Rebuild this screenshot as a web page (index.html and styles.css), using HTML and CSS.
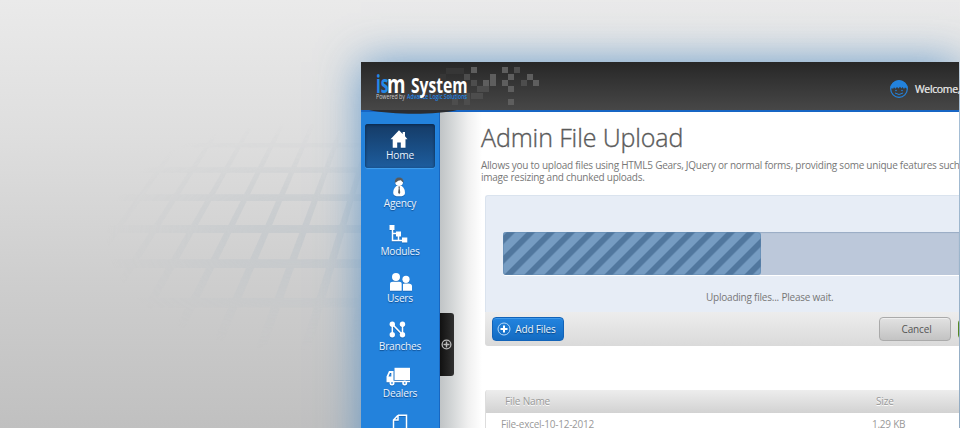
FILE: index.html
```html
<!DOCTYPE html>
<html lang="en">
<head>
<meta charset="utf-8">
<title>ism System</title>
<link rel="stylesheet" href="styles.css">
</head>
<body>
<div class="stage">
  <svg class="floor" width="400" height="310" viewBox="-300 0 1200 930">
    <defs>
      <radialGradient id="fade" gradientUnits="userSpaceOnUse" cx="0" cy="0" r="1" gradientTransform="translate(580 350) scale(560 340)">
        <stop offset="0" stop-color="#fff"/><stop offset=".35" stop-color="#fff" stop-opacity=".7"/><stop offset=".7" stop-color="#fff" stop-opacity=".25"/><stop offset="1" stop-color="#fff" stop-opacity="0"/>
      </radialGradient>
      <mask id="m" maskUnits="userSpaceOnUse" x="-300" y="0" width="1200" height="930"><path fill="url(#fade)" d="M-300 0H900V930H-300z"/></mask>
    </defs>
    <path mask="url(#m)" fill="#bdc5ca" fill-opacity=".58" d="M637 0H649L354 700H324zM727 0H739L491 700H461zM818 0H830L628 700H598zM908 0H920L766 700H736zM547 0H559L217 700H187zM456 0H468L80 700H50zM366 0H378L-57 700H-87zM276 0H288L-195 700H-225zM-300 69H900V82H-300zM-300 142H900V158H-300zM-300 223H900V243H-300zM-300 315H900V339H-300zM-300 418H900V444H-300zM-300 534H900V562H-300z"/>
  </svg>
  <div class="window">
    <header class="header">
      <svg class="pixels" width="100" height="48" viewBox="0 0 100 48">
        <path fill="#363636" d="M6 6h6v6h-6zM12 6h6v6h-6zM18 6h6v6h-6zM0 12h6v6h-6z"/>
        <path fill="#4d4d4d" d="M24 12h6v6h-6zM24 31h6v6h-6zM12 37h6v6h-6zM31 18h6v6h-6zM37 24h6v6h-6zM37 31h6v6h-6zM31 31h6v6h-6zM43 24h6v6h-6zM81 18h6v6h-6zM74 5h6v6h-6zM24 37h6v6h-6z"/>
        <path fill="#5e5e5e" d="M31 5h6v6h-6zM50 12h6v6h-6zM62 5h6v6h-6zM43 18h6v6h-6zM50 18h6v6h-6zM62 18h6v6h-6zM68 12h6v6h-6zM68 24h6v6h-6zM68 37h6v6h-6zM87 12h6v6h-6zM93 18h6v6h-6z"/>
      </svg>
      <svg class="logo" width="94" height="32" viewBox="0 0 94 32">
        <text class="logo-tag" x="0" y="27.800" textLength="29" lengthAdjust="spacingAndGlyphs">Powered by</text>
        <text class="logo-tag blue" x="31" y="27.800" textLength="60" lengthAdjust="spacingAndGlyphs">Advance Logic Solutions</text>
        <text class="logo-ism blue" x="0" y="21.500" textLength="12.500" lengthAdjust="spacingAndGlyphs">is</text>
        <text class="logo-ism" x="11" y="21.500" textLength="18.500" lengthAdjust="spacingAndGlyphs">m</text>
        <text class="logo-name" x="35" y="21.500" textLength="56.500" lengthAdjust="spacingAndGlyphs">System</text>
      </svg>
      <div class="user">
        <svg width="20" height="20" viewBox="0 0 20 20"><circle cx="10" cy="10" r="8.300" fill="none" stroke="#2382dc" stroke-width="1.200"/><path fill="#2382dc" d="M1.200 10A8.800 8.800 0 0 1 18.800 10L17 9 16 8.500 15 10 13.500 8 12.500 9.500 11 7.800 9.500 9.500 8 8 6.500 9.700 5 8.200 4 10 3 9z"/><circle cx="7" cy="11.500" r=".8" fill="#2382dc"/><circle cx="13" cy="11.500" r=".8" fill="#2382dc"/><path d="M6 14q4 3 8 0" fill="none" stroke="#2382dc"/></svg>
        <span>Welcome,</span>
      </div>
    </header>
    <div class="body">
      <svg class="lip" width="99" height="6" viewBox="0 0 99 6"><path fill="#2b2d31" d="M8 0H96C76 5 32 5 8 0z"/></svg>
      <nav class="nav">
        <a class="item active"><svg width="24" height="20" viewBox="0 0 24 20"><path d="M11 1.300L2.500 10.300H4.700V18.800H9.200V13.500H12.800V18.800H17.500V10.300H19.500L17 7.300V3H14.700V5z"/></svg><span>Home</span></a>
        <a class="item"><svg width="24" height="22" viewBox="0 0 24 22"><path d="M8 10Q4.500 13 4.500 17.500 4.500 21.300 11 21.300T17.500 17.500Q17.500 13 14 10z"/><circle cx="11" cy="5.500" r="4.300"/><path fill="#565a5e" d="M6.300 6Q6 .6 11 .6T15.800 6Q14.500 5.500 13 3.600 10 3.500 7.500 6zM10.200 10.500h1.800l-.4 2 .7 4.500-1.200 2-1.200-2 .7-4.500z"/></svg><span>Agency</span></a>
        <a class="item"><svg width="24" height="20" viewBox="0 0 24 20"><path d="M1.500 1h5v5H1.500zM8 7.500h5v5H8zM14 13.500h5.300v5H14z"/><path class="line" d="M4.500 5V16.500H15M4.500 9.500H9M10.500 12V16.500"/></svg><span>Modules</span></a>
        <a class="item"><svg width="26" height="20" viewBox="0 0 26 20"><circle cx="9" cy="5" r="4"/><circle cx="19" cy="7.300" r="3.600"/><path d="M3 18.700V12Q3 9.700 6 9.700H12Q14.700 9.700 14.700 12V18.700zM16 18.700V12Q16.500 11.500 18 11.500H21Q25 11.500 25 14V18.700z"/></svg><span>Users</span></a>
        <a class="item"><svg width="24" height="20" viewBox="0 0 24 20"><circle cx="4.300" cy="5.200" r="2.700"/><circle cx="14.500" cy="5.200" r="2.700"/><circle cx="4.300" cy="15.700" r="2.700"/><circle cx="14.500" cy="15.700" r="2.700"/><path class="line" d="M4.300 15.700V5.200L14.500 15.700V5.200"/></svg><span>Branches</span></a>
        <a class="item"><svg width="28" height="20" viewBox="0 0 28 20"><path d="M8.500 .8H24V13H8.500z"/><path fill-rule="evenodd" d="M.5 14.500V9.500L3 4H7.500V13.800H24V15.300H.5zM4 6L2.500 9.500H5.300V6z"/><circle cx="6" cy="16" r="2.500"/><circle cx="18.700" cy="16" r="2.500"/><path fill="#2382dc" d="M5.200 15.200h1.600v1.600H5.200zM17.900 15.200h1.600v1.600h-1.600z"/></svg><span>Dealers</span></a>
        <a class="item"><svg width="24" height="20" viewBox="0 0 24 20"><path class="line" d="M10 .2H18.500V22M10 .2L5.500 5V22M10 .2V5H5.500"/></svg></a>
      </nav>
      <div class="handle"><svg width="11" height="11" viewBox="0 0 11 11"><circle cx="5.500" cy="5.500" r="4.400" fill="none" stroke="#bbb" stroke-width="1.300"/><path d="M5.500 2.500V8.500M2.500 5.500H8.500" stroke="#bbb" stroke-width="1.500"/></svg></div>
      <main class="main">
        <h1>Admin File Upload</h1>
        <p class="intro">Allows you to upload files using HTML5 Gears, JQuery or normal forms, providing some unique features such as<br>image resizing and chunked uploads.</p>
        <section class="uploader">
          <div class="progress-area">
            <div class="track"><svg class="bar" width="258" height="43" viewBox="0 0 258 43"><defs><pattern id="stripes" width="20" height="43" patternUnits="userSpaceOnUse" patternTransform="translate(4 0) skewX(-45)"><path fill="#769cc2" d="M0 0h20v43H0z"/><path fill="#51779e" d="M0 0h8.500v43H0z"/></pattern></defs><rect width="258" height="43" rx="3" fill="url(#stripes)"/><rect x=".5" y=".5" width="257" height="42" rx="3" fill="none" stroke="#5e86ad" stroke-opacity=".45"/></svg></div>
            <div class="status">Uploading files... Please wait.</div>
          </div>
          <div class="actions">
            <button class="btn add"><svg width="14" height="14" viewBox="0 0 14 14"><circle cx="7" cy="7" r="6" fill="none" stroke="#b5d8f7"/><path d="M7 3.500V10.500M3.500 7H10.500" stroke="#fff" stroke-width="2"/></svg><span>Add Files</span></button>
            <button class="btn cancel">Cancel</button>
            <button class="btn upload"></button>
          </div>
        </section>
        <section class="files">
          <div class="row head"><span>File Name</span><span>Size</span></div>
          <div class="row"><span>File-excel-10-12-2012</span><span>1.29 KB</span></div>
        </section>
      </main>
    </div>
  </div>
</div>
</body>
</html>
```
FILE: styles.css
```css
* { box-sizing: border-box; }
body { margin: 0; overflow: hidden; background: #fff; font-family: "Open Sans", sans-serif; }
.stage { position: relative; height: 428px; overflow: hidden; padding: 62px 1px 0 361px; background: linear-gradient(#eaeaea, #dedede 32%, #cecece 65%, #c0c0c0); }
.floor { position: absolute; left: 0; top: 120px; }
.window { position: relative; height: 520px; background: #fff; box-shadow: 0 0 40px rgba(78, 140, 198, .8); display: flex; flex-direction: column; }
.header { position: relative; height: 50px; flex: none; display: flex; justify-content: space-between; background: linear-gradient(#272727, #474747); border-bottom: 2px solid #1765c4; }
.pixels { position: absolute; left: 79px; top: 0; }
.logo { position: relative; margin: 9px 0 0 15px; overflow: visible; }
.logo text { fill: #fff; }
.logo .blue { fill: #2388e8; }
.logo-ism { font-size: 25px; font-weight: 700; }
.logo-name { font-size: 20.5px; font-weight: 700; }
.logo .logo-tag { font-size: 7px; font-weight: 400; fill: #ccc; }
.logo .logo-tag.blue { fill: #2388e8; font-weight: 600; }
.user { display: flex; align-items: center; height: 54px; gap: 6px; width: 70px; color: #eee; font-size: 10.500px; letter-spacing: -.35px; white-space: nowrap; font-weight: 400; -webkit-text-stroke: .2px #eee; }
.user svg { flex: none; }
.body { position: relative; flex: 1; display: flex; min-height: 0; }
.lip { position: absolute; left: 0; top: -2px; z-index: 2; }
.nav { width: 79px; flex: none; padding: 12px 4px 0 4px; background: #2382dc; border-right: 1px solid #1767c2; display: flex; flex-direction: column; gap: 3.600px; }
.item { height: 44px; flex: none; display: flex; flex-direction: column; align-items: center; color: #eaf4ff; font-size: 10.200px; letter-spacing: -.25px; line-height: 14px; text-shadow: 0 1px 1px rgba(0, 40, 90, .6); }
.item span { margin-top: -.6px; }
.item svg { fill: #fff; height: 20px; flex: none; margin: 5px 0 0; filter: drop-shadow(0 1px 0 rgba(0, 50, 110, .3)); overflow: visible; }
.item .line { fill: none; stroke: #fff; stroke-width: 1.500; }
.active { border-radius: 3px; background: linear-gradient(#153b66, #1d5d9e); box-shadow: inset 0 1px 3px #0a284b, 0 1px 1px #43a0ee; }
.handle { position: absolute; left: 79px; top: 201px; width: 14px; height: 63px; border-radius: 0 3px 3px 0; background: linear-gradient(90deg, #111, #303030); display: flex; align-items: center; justify-content: center; }
.handle svg { margin-left: -1px; flex: none; }
.main { flex: 1; min-width: 0; padding: 8px 0 0 41px; overflow: hidden; background: linear-gradient(90deg, #c0c4c6 0, #d3d6d7 12px, #f0f0f0 28px, #fff 42px) no-repeat 0 0 / 42px 100%; color: #777; }
h1 { margin: 0; font-size: 25px; line-height: 34px; font-weight: 300; letter-spacing: -.12px; color: #5a5a5a; -webkit-text-stroke: .35px #5a5a5a; white-space: nowrap; }
.intro { margin: 6px 0 12px; font-size: 10px; letter-spacing: -.25px; line-height: 11.500px; white-space: nowrap; }
.uploader, .files { margin-left: 4px; }
.progress-area { height: 117px; padding: 36px 0 0 17px; border: 1px solid #dae3ee; border-width: 1px 0 0 1px; border-radius: 3px 0 0; background: #e7edf6; }
.track { height: 43px; background: #bcc8da; border-radius: 3px 0 0 3px; box-shadow: 0 1px 0 #fff, inset 0 1px 1px #98abc4; }
.bar { display: block; }
.status { margin: 15px 0 0 203px; font-size: 10px; letter-spacing: -.22px; line-height: 14px; }
.actions { height: 34px; display: flex; align-items: center; padding: 0 0 0 7px; background: linear-gradient(#ededed, #dadada); border-radius: 0 0 0 3px; overflow: hidden; }
.btn { flex: none; height: 24px; width: 72px; padding: 0; border-radius: 4px; font: 10px "Open Sans", sans-serif; letter-spacing: -.15px; display: flex; align-items: center; justify-content: center; gap: 4px; }
.add { padding-right: 3px; color: #eaf5ff; border: 1px solid #1263b8; background: linear-gradient(#2384df, #136bc2); box-shadow: inset 0 1px 0 #419aea; text-shadow: 0 1px 1px #0b427b; }
.cancel { margin-left: 315px; padding-left: 3px; color: #555; border: 1px solid #aaa; background: linear-gradient(#e2e2e2, #c3c3c3); box-shadow: inset 0 1px 0 #eee; }
.upload { margin-left: 7px; background: #78af35; border: 1px solid #578923; height: 20px; }
.files { margin-top: 44px; }
.row { display: grid; grid-template-columns: 371px 1fr; padding-left: 15px; height: 24px; line-height: 23px; font-size: 10px; letter-spacing: -.25px; color: #999; border-left: 1px solid #ddd; }
.head { height: 23px; border-radius: 3px 0 0; padding-left: 19px; letter-spacing: -.15px; background: linear-gradient(#ededed, #d2d2d2); text-shadow: 0 1px 0 #fff; }
```
